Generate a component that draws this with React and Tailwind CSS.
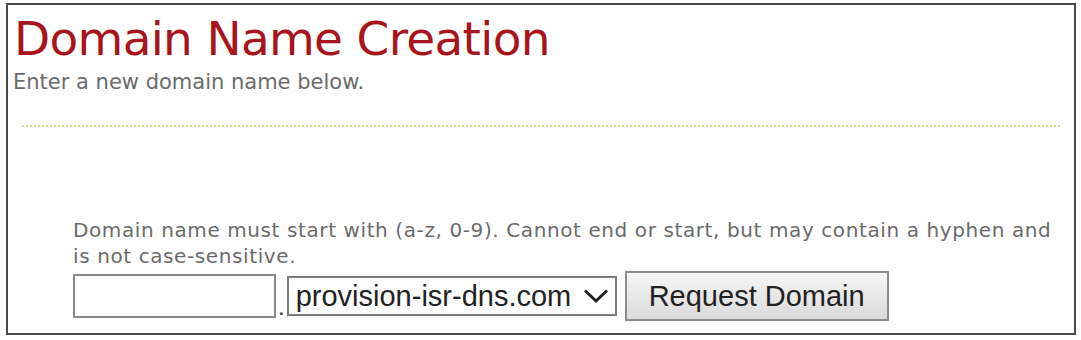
export default function App() {
  return (
    <div className="w-[1081px] h-[340px] bg-white pt-[3px] pl-[6px]">
      <div className="w-[1070px] h-[332px] border-2 border-[#4a4a4a] bg-white flex flex-col">
        <h1
          className="text-[47px] leading-none text-[#a8141c] pl-[6px] pt-[10px] tracking-[-0.7px]"
          style={{ fontFamily: 'Tahoma, "DejaVu Sans", Verdana, sans-serif' }}
        >
          Domain Name Creation
        </h1>
        <p
          className="text-[21px] leading-none text-[#6b6b6b] pl-[5px] pt-[10px]"
          style={{ fontFamily: 'Tahoma, "DejaVu Sans", Verdana, sans-serif' }}
        >
          Enter a new domain name below.
        </p>
        <div className="mx-[14px] mt-[32px] border-t-2 border-dotted border-[#d6dd8c]" />
        <div className="pl-[65px] pr-[12px] mt-[90px]">
          <p
            className="text-[20px] leading-[26px] text-[#6b6b6b] tracking-[0.6px]"
            style={{ fontFamily: 'Tahoma, "DejaVu Sans", Verdana, sans-serif' }}
          >
            Domain name must start with (a-z, 0-9). Cannot end or start, but may contain a hyphen and is not case-sensitive.
          </p>
          <div className="flex items-center mt-[2px]" style={{ fontFamily: '"Liberation Sans", Arial, sans-serif' }}>
            <input
              type="text"
              className="w-[203px] h-[44px] border-2 border-[#8a8a8a] bg-white outline-none"
            />
            <span className="text-[24px] text-[#333] px-[2px] self-end mb-[2px] leading-none">.</span>
            <div className="w-[330px] h-[40px] border-2 border-[#7a7a7a] bg-white flex items-center justify-between pl-[7px] pr-[6px]">
              <span className="text-[29px] text-[#222] leading-none">provision-isr-dns.com</span>
              <svg width="26" height="16" viewBox="0 0 26 16" fill="none">
                <path d="M2 2.5 L13 13 L24 2.5" stroke="#222" strokeWidth="3" />
              </svg>
            </div>
            <button className="ml-[8px] w-[264px] h-[50px] border-2 border-[#8c8c8c] bg-gradient-to-b from-[#f6f6f6] to-[#dadada] text-[29px] text-[#222] leading-none">
              Request Domain
            </button>
          </div>
        </div>
      </div>
    </div>
  );
}
